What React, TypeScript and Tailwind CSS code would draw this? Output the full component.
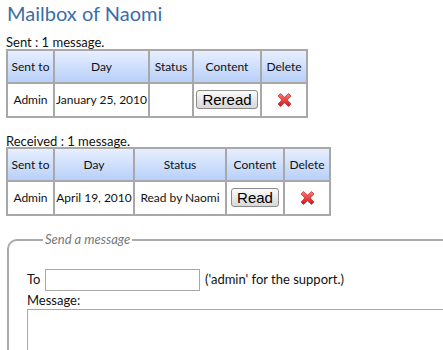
const font = { fontFamily: "Lato, 'Open Sans', sans-serif" }

function DeleteIcon() {
  return (
    <svg width="17" height="16" viewBox="0 0 16 16">
      <defs>
        <linearGradient id="xg" x1="0" y1="0" x2="0" y2="1">
          <stop offset="0" stopColor="#ff7b6b" />
          <stop offset="1" stopColor="#d0141e" />
        </linearGradient>
      </defs>
      <path
        d="M1.5 4 L4 1.5 L8 5.3 L12 1.5 L14.5 4 L10.7 8 L14.5 12 L12 14.5 L8 10.7 L4 14.5 L1.5 12 L5.3 8 Z"
        fill="url(#xg)"
        stroke="#b50f18"
        strokeWidth="0.6"
        strokeLinejoin="round"
      />
    </svg>
  )
}

function Button({ children }: { children: React.ReactNode }) {
  return (
    <button className="rounded-[3px] border border-[#8a8a8a] bg-gradient-to-b from-[#fafafa] to-[#d8d8d8] px-[5px] text-[15px] leading-[17px] text-black [font-family:'Liberation_Sans',Arial,sans-serif]">
      {children}
    </button>
  )
}

type Row = { to: string; day: string; status: string; action: string }

function MailTable({ widths, row }: { widths: number[]; row: Row }) {
  const heads = ["Sent to", "Day", "Status", "Content", "Delete"]
  const cell = "border-2 border-[#a8a8a8] p-0 text-center whitespace-nowrap"
  return (
    <table className="table-fixed border-collapse border-2 border-[#a8a8a8] text-[12px] text-[#111]">
      <thead>
        <tr className="h-[33px] bg-gradient-to-b from-[#e9f0ff] to-[#b6cff8]">
          {heads.map((h, i) => (
            <th key={h} style={{ width: widths[i] }} className={`${cell} font-normal`}>
              {h}
            </th>
          ))}
        </tr>
      </thead>
      <tbody>
        <tr className="h-[34px]">
          <td className={cell}>{row.to}</td>
          <td className={cell}>{row.day}</td>
          <td className={cell}>{row.status}</td>
          <td className={cell}>
            <Button>{row.action}</Button>
          </td>
          <td className={cell}>
            <div className="flex justify-center">
              <DeleteIcon />
            </div>
          </td>
        </tr>
      </tbody>
    </table>
  )
}

export default function App() {
  return (
    <div className="h-[350px] w-[443px] overflow-hidden bg-white" style={font}>
      <div className="pl-[6px] pt-[1px]">
        <h1 className="pl-[1px] text-[20px] leading-[24px] text-[#3a6ea8]">Mailbox of Naomi</h1>

        <p className="mt-[10px] text-[13px] leading-[14px] text-[#111]">Sent : 1 message.</p>
        <MailTable
          widths={[47, 95, 44, 68, 46]}
          row={{ to: "Admin", day: "January 25, 2010", status: "", action: "Reread" }}
        />

        <p className="mt-[17px] text-[13px] leading-[12px] text-[#111]">Received : 1 message.</p>
        <MailTable
          widths={[47, 80, 92, 58, 46]}
          row={{ to: "Admin", day: "April 19, 2010", status: "Read by Naomi", action: "Read" }}
        />

        <fieldset className="ml-[1px] mt-[14px] w-[480px] rounded-tl-[10px] border-2 border-[#aaaaaa] pb-4 pl-[18px] pt-[19px]">
          <legend className="ml-[16px] px-[2px] text-[13px] italic text-[#777]">Send a message</legend>
          <div className="flex items-center text-[13px] text-[#111]">
            <span className="w-[18px]">To</span>
            <input className="h-[22px] w-[155px] border border-[#a8a8a8]" />
            <span className="ml-[5px]">('admin' for the support.)</span>
          </div>
          <p className="mt-[1px] text-[13px] leading-[16px] text-[#111]">Message:</p>
          <textarea className="mt-[1px] h-[80px] w-[440px] border border-[#a8a8a8]" />
        </fieldset>
      </div>
    </div>
  )
}
